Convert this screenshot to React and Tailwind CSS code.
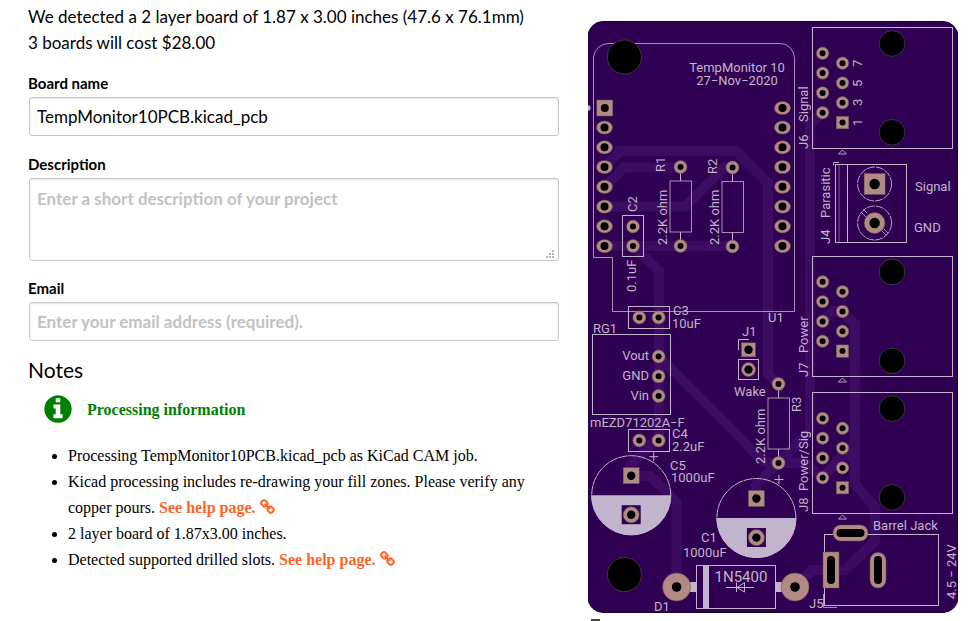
import React from "react";

const SILK = "#c3b4cd";
const PAD = "#b28a84";
const BOARD = "#300052";
const TRACE = "#3e0b62";

function LinkIcon() {
  return (
    <svg viewBox="0 0 1792 1792" className="inline-block size-4 align-[-2px]" fill="currentColor" stroke="currentColor" strokeWidth="50" aria-hidden="true">
      <path d="M1456 1216q0-40-28-68l-208-208q-28-28-68-28-42 0-72 32 3 3 19 18.5t21.5 21.5 15 19 13 25.5 3.5 27.5q0 40-28 68t-68 28q-15 0-27.5-3.5t-25.5-13-19-15-21.5-21.5-18.5-19q-33 31-33 73 0 40 28 68l206 207q27 27 68 27 40 0 68-26l147-146q28-28 28-67zm-703-705q0-40-28-68l-206-207q-28-28-68-28-39 0-68 27l-147 146q-28 28-28 67 0 40 28 68l208 208q27 27 68 27 42 0 72-31-3-3-19-18.5t-21.5-21.5-15-19-13-25.5-3.5-27.5q0-40 28-68t68-28q15 0 27.5 3.5t25.5 13 19 15 21.5 21.5 18.5 19q33-31 33-73zm895 705q0 120-85 203l-147 146q-83 83-203 83-121 0-204-85l-206-207q-83-83-83-203 0-123 88-209l-88-88q-86 88-208 88-120 0-204-84l-208-208q-84-84-84-204t85-203l147-146q83-83 203-83 121 0 204 85l206 207q83 83 83 203 0 123-88 209l88 88q86-88 208-88 120 0 204 84l208 208q84 84 84 204z" />
    </svg>
  );
}

function InfoIcon() {
  return (
    <svg viewBox="0 0 1792 1792" className="size-8 shrink-0" fill="currentColor" aria-hidden="true">
      <path d="M1152 1376v-160q0-14-9-23t-23-9h-96v-512q0-14-9-23t-23-9h-320q-14 0-23 9t-9 23v160q0 14 9 23t23 9h96v320h-96q-14 0-23 9t-9 23v160q0 14 9 23t23 9h448q14 0 23-9t9-23zm-128-896v-160q0-14-9-23t-23-9h-192q-14 0-23 9t-9 23v160q0 14 9 23t23 9h192q14 0 23-9t9-23zm640 416q0 209-103 385.5t-279.5 279.5-385.5 103-385.5-103-279.5-279.5-103-385.5 103-385.5 279.5-279.5 385.5-103 385.5 103 279.5 279.5 103 385.5z" />
    </svg>
  );
}

function HelpLink() {
  return (
    <a href="#help" className="font-bold text-[#ff6426]">
      See help page. <LinkIcon />
    </a>
  );
}

/* ---- board drawing primitives ---- */

function Via({ x, y, r = 6.5, hole = 3 }) {
  return (
    <g>
      <circle cx={x} cy={y} r={r} fill={PAD} stroke="#64564a" strokeWidth="0.5" />
      <circle cx={x} cy={y} r={hole} fill="#000" />
    </g>
  );
}

function SquarePad({ x, y, size = 13, hole = 3 }) {
  return (
    <g>
      <rect x={x - size / 2} y={y - size / 2} width={size} height={size} fill={PAD} stroke="#64564a" strokeWidth="0.5" />
      <circle cx={x} cy={y} r={hole} fill="#000" />
    </g>
  );
}

function HeaderPad({ x, y }) {
  return (
    <g>
      <ellipse cx={x} cy={y} rx="8" ry="6.6" fill={PAD} stroke="#64564a" strokeWidth="0.5" />
      <circle cx={x} cy={y} r="4" fill="#000" />
    </g>
  );
}

function Mount({ x, y, r }) {
  return <circle cx={x} cy={y} r={r} fill="#000" stroke="#4a4a4a" strokeWidth="0.7" />;
}

function Label({ x, y, up, children, size = 13, anchor = "start" }) {
  return (
    <text
      x={x}
      y={y}
      fontSize={size}
      textAnchor={anchor}
      fill={SILK}
      transform={up ? `rotate(-90 ${x} ${y})` : undefined}
    >
      {children}
    </text>
  );
}

function Jack({ top, bottom, first }) {
  return (
    <g>
      <rect x="812.5" y={top} width="140" height={bottom - top} fill="none" stroke={SILK} />
      {[0, 1, 2, 3].map((i) => (
        <Via key={i} x={822.6} y={first + i * 19.8} r={6.2} />
      ))}
      {[0, 1, 2].map((i) => (
        <Via key={i} x={842.5} y={first + 9.9 + i * 19.8} r={6.2} />
      ))}
      <SquarePad x={842.5} y={first + 69.3} size={12.4} />
      <Mount x={892} y={first - 9.8} r={12.8} />
      <Mount x={892} y={first + 79} r={12.8} />
      <path d={`M842.5 ${bottom + 1.5} l4 4 h-8 z`} fill="none" stroke={SILK} strokeWidth="0.9" />
    </g>
  );
}

function Resistor({ x, y }) {
  return (
    <g>
      <path d={`M${x} ${y} v14 M${x} ${y + 65} v14`} stroke={SILK} />
      <rect x={x - 10.5} y={y + 14} width="21.5" height="51" fill="none" stroke={SILK} strokeWidth="0.8" />
      <Via x={x} y={y} />
      <Via x={x} y={y + 79} />
    </g>
  );
}

function Electrolytic({ x, y }) {
  return (
    <g>
      <circle cx={x} cy={y} r="39.5" fill="none" stroke={SILK} strokeDasharray="9 0.6" />
      <path d={`M${x - 40} ${y} a40 40 0 0 0 80 0 z`} fill={SILK} />
      <rect x={x - 9.5} y={y + 10} width="19" height="19" fill={BOARD} />
      <SquarePad x={x} y={y - 19.5} size={16} hole={4.2} />
      <Via x={x} y={y + 19.6} r={8} hole={4.2} />
      <path d={`M${x + 18} ${y - 38.5} h9 M${x + 22.5} ${y - 43} v9`} stroke={SILK} />
    </g>
  );
}

function Board() {
  const rows = [127.5, 147.3, 167, 186.8, 206.6, 226.3, 246.1];
  return (
    <svg viewBox="588 21 370 592" className="block w-full font-[Roboto,sans-serif]" role="img" aria-label="Board top side">
      <rect x="588" y="21.5" width="370" height="591" rx="15" fill={BOARD} stroke="#180030" />

      <g fill="none" stroke={TRACE} strokeWidth="10">
        <path d="M604.5 167 L620 151 H736 L768 183 V374 L778 384" />
        <path d="M604.5 187 L624 167.5 H680" />
        <path d="M604.5 206.5 H685 L725 167 H732" />
        <path d="M604.5 246 H732" />
        <path d="M633 246 L659 271 V437 L631 464 V476 H650 L676.5 502 V587" />
        <path d="M658.6 356 L764 462 L778 463 L756 485 V499" />
        <path d="M822.6 112.6 L810 124 V431 L778 463" />
        <path d="M822.6 321 L833 311 H842 L855 324 V484 L875 507 V541 L845 570 H812 L795 587" />
        <path d="M855 442 L822 478 L806 463 H778" />
        <path d="M842 448 L855 461" />
      </g>

      <path
        d="M593.5 257.5 V57 Q593.5 52 599 47 Q603 43.5 608 43.5 H781 Q786 43.5 790.5 48 Q794.5 53 794.5 58 V311.5 H612.5 V257.5 Z"
        fill="none"
        stroke={SILK}
        strokeWidth="0.8"
      />
      <path d="M588 105.3 a2.6 2.6 0 0 1 0 5.2 z" fill={SILK} />
      <Mount x={624.4} y={57} r={17} />
      <Mount x={624.4} y={574.5} r={17} />

      <SquarePad x={604.8} y={108} size={16} hole={4} />
      <HeaderPad x={782.5} y={108} />
      {rows.map((y) => (
        <g key={y}>
          <HeaderPad x={604.5} y={y} />
          <HeaderPad x={782.5} y={y} />
        </g>
      ))}
      <Label x={737} y={72} anchor="middle">TempMonitor 10</Label>
      <Label x={737} y={85} anchor="middle">27−Nov−2020</Label>

      <Jack top={27.5} bottom={148.5} first={53.3} />
      <Jack top={256.5} bottom={376.5} first={281.8} />
      <Jack top={392.5} bottom={513.5} first={418.4} />
      <Label x={862} y={67} up>7</Label>
      <Label x={862} y={87} up>5</Label>
      <Label x={862} y={106} up>3</Label>
      <Label x={862} y={126} up>1</Label>
      <Label x={808} y={149} up>J6</Label>
      <Label x={808} y={122} up>Signal</Label>
      <Label x={808} y={377} up>J7</Label>
      <Label x={808} y={353} up>Power</Label>
      <Label x={808} y={512} up>J8</Label>
      <Label x={808} y={491} up>Power/Sig</Label>

      <Resistor x={680.5} y={167} />
      <Resistor x={732.5} y={167.5} />
      <Resistor x={778.5} y={384} />
      <Label x={665} y={172} up>R1</Label>
      <Label x={717} y={174} up>R2</Label>
      <Label x={801} y={412} up>R3</Label>
      <Label x={667} y={245} up>2.2K ohm</Label>
      <Label x={719} y={245} up>2.2K ohm</Label>
      <Label x={765} y={464} up>2.2K ohm</Label>

      <g fill="none" stroke={SILK}>
        <rect x="622.5" y="215.5" width="21" height="41" />
        <rect x="628.5" y="306.5" width="41" height="22" />
        <rect x="628.5" y="429.5" width="41" height="22" />
        <rect x="592.5" y="334.5" width="78" height="80" />
        <path d="M738.5 350 V339.5 H749" />
        <rect x="738.5" y="359.5" width="20" height="20" />
      </g>
      <Via x={633} y={226.5} />
      <Via x={633} y={246} />
      <Via x={639.3} y={317.4} />
      <Via x={658.6} y={317.4} />
      <Via x={639.3} y={440.4} />
      <Via x={658.6} y={440.4} />
      <Via x={658.6} y={356.5} />
      <Via x={658.6} y={376.3} />
      <Via x={658.6} y={396} />
      <SquarePad x={748.5} y={349.8} size={14} hole={4.2} />
      <Via x={748.5} y={369.6} r={7} hole={4.2} />
      <Label x={637} y={212} up>C2</Label>
      <Label x={636} y={292} up>0.1uF</Label>
      <Label x={673} y={315}>C3</Label>
      <Label x={672} y={328}>10uF</Label>
      <Label x={593} y={333}>RG1</Label>
      <Label x={768} y={322}>U1</Label>
      <Label x={742} y={336}>J1</Label>
      <Label x={734} y={396}>Wake</Label>
      <Label x={649} y={360} anchor="end">Vout</Label>
      <Label x={649} y={380} anchor="end">GND</Label>
      <Label x={649} y={400} anchor="end">Vin</Label>
      <Label x={590} y={427}>mEZD71202A−F</Label>
      <Label x={672} y={438}>C4</Label>
      <Label x={672} y={451}>2.2uF</Label>

      <g fill="none" stroke={SILK}>
        <rect x="835.5" y="164.5" width="71" height="78" />
        <path d="M847.5 164.5 V242.5" />
        <path d="M839 164.5 V242.5" strokeOpacity="0.5" />
        <path d="M833.5 165.5 V162.5 H839" />
        <circle cx="874.6" cy="184" r="17" strokeDasharray="8 1" strokeWidth="0.9" />
        <circle cx="874.6" cy="223" r="17" strokeDasharray="8 1" strokeWidth="0.9" />
        <path d="M861 212 l5 5 M863 209 l4 4 M882 231 l4 4 M884 229 l4 4" strokeWidth="0.8" />
      </g>
      <SquarePad x={874.6} y={184} size={21} hole={5.2} />
      <Via x={874.6} y={223} r={10.4} hole={5.2} />
      <Label x={830} y={244} up>J4</Label>
      <Label x={830} y={218} up>Parasitic</Label>
      <Label x={915} y={191}>Signal</Label>
      <Label x={914} y={232}>GND</Label>

      <Electrolytic x={631.2} y={495.2} />
      <Electrolytic x={756.4} y={518} />
      <Label x={670} y={470}>C5</Label>
      <Label x={671} y={482}>1000uF</Label>
      <Label x={701} y={542}>C1</Label>
      <Label x={683} y={557}>1000uF</Label>

      <rect x="690" y="582" width="6" height="10" fill={SILK} />
      <rect x="776" y="582" width="6" height="10" fill={SILK} />
      <rect x="703" y="565" width="6" height="43" fill={SILK} />
      <rect x="696.5" y="565.5" width="79" height="43" fill="none" stroke={SILK} />
      <Via x={676.6} y={587} r={14} hole={4.8} />
      <Via x={795} y={587} r={14} hole={4.8} />
      <path d="M726 587.5 H754 M736.5 582.5 V592 M744.5 582.5 V592 L737 587.5 Z" fill="none" stroke={SILK} />
      <Label x={741} y={582} size={15} anchor="middle">1N5400</Label>
      <Label x={654} y={611}>D1</Label>

      <rect x="824.5" y="534.5" width="114" height="71" fill="none" stroke={SILK} />
      <path d="M823.5 594 V607.5 H837" fill="none" stroke={SILK} strokeWidth="0.8" />
      <g fill={PAD} stroke="#64564a" strokeWidth="0.5">
        <rect x="833" y="525" width="35" height="16" rx="8" />
        <rect x="823" y="552" width="16" height="36" />
        <rect x="870" y="552.5" width="16" height="35.5" rx="8" />
      </g>
      <rect x="836.5" y="529" width="28" height="8" rx="4" />
      <rect x="827" y="556" width="8" height="28" rx="4" />
      <rect x="874" y="556" width="8" height="28" rx="4" />
      <Label x={873} y={530}>Barrel Jack</Label>
      <Label x={809} y={608}>J5</Label>
      <Label x={956} y={599} up>4.5 − 24V</Label>
    </svg>
  );
}

const FIELD =
  "block w-full rounded-[3px] border border-[#c6c6c6] bg-white px-[7px] text-[17px] text-black placeholder:text-[#c2c2c2] placeholder:font-bold shadow-[inset_0_1px_2px_rgba(0,0,0,0.1)] outline-none";

export default function App() {
  return (
    <main className="flex items-start gap-[29px] bg-white pl-7 pr-[10px] font-[Lato,'Open_Sans',sans-serif] text-black">
      <form className="min-w-0 flex-1 pt-1">
        <p className="text-[17px] leading-[26px]">
          We detected a 2 layer board of 1.87 x 3.00 inches (47.6 x 76.1mm)
          <br />3 boards will cost $28.00
        </p>

        <div className="mt-4">
          <label htmlFor="name" className="block pb-[3px] text-[15px] font-bold leading-[22px]">Board name</label>
          <div className="pl-px">
            <input id="name" type="text" defaultValue="TempMonitor10PCB.kicad_pcb" className={`h-[39px] ${FIELD}`} />
          </div>
        </div>

        <div className="mt-[17px]">
          <label htmlFor="description" className="block pb-[3px] text-[15px] font-bold leading-[22px]">Description</label>
          <div className="relative pl-px">
            <textarea
              id="description"
              placeholder="Enter a short description of your project"
              className={`h-[83px] resize-none pt-2 leading-6 ${FIELD}`}
            />
            <svg viewBox="0 0 9 8" className="pointer-events-none absolute bottom-[3px] right-1 h-2 w-[9px]" fill="#b5b5b5" aria-hidden="true">
              <path d="M6 0h2v2H6zM3 3h2v2H3zM6 3h2v2H6zM0 6h2v2H0zM3 6h2v2H3zM6 6h2v2H6z" />
            </svg>
          </div>
        </div>

        <div className="mt-4">
          <label htmlFor="email" className="block pb-[3px] text-[15px] font-bold leading-[22px]">Email</label>
          <div className="pl-px">
            <input id="email" type="email" placeholder="Enter your email address (required)." className={`h-[39px] ${FIELD}`} />
          </div>
        </div>

        <h2 className="mt-4 text-[21px] leading-[26px]">Notes</h2>

        <section className="font-['Liberation_Serif',serif] text-[16px] leading-[26px]">
          <h3 className="mt-[10px] flex items-center gap-[13px] pl-[14px] font-bold text-[#008000]">
            <InfoIcon />
            <span className="pt-[2px]">Processing information</span>
          </h3>
          <ul className="mt-[18px] list-disc pl-10">
            <li>Processing TempMonitor10PCB.kicad_pcb as KiCad CAM job.</li>
            <li>
              Kicad processing includes re-drawing your fill zones. Please verify any copper pours. <HelpLink />
            </li>
            <li>2 layer board of 1.87x3.00 inches.</li>
            <li>
              Detected supported drilled slots. <HelpLink />
            </li>
          </ul>
        </section>
      </form>

      <figure className="w-[370px] shrink-0 pt-[21px]">
        <Board />
        <div className="ml-[3px] mt-[6px] h-[2px] w-[9px] bg-[#444]" />
      </figure>
    </main>
  );
}
